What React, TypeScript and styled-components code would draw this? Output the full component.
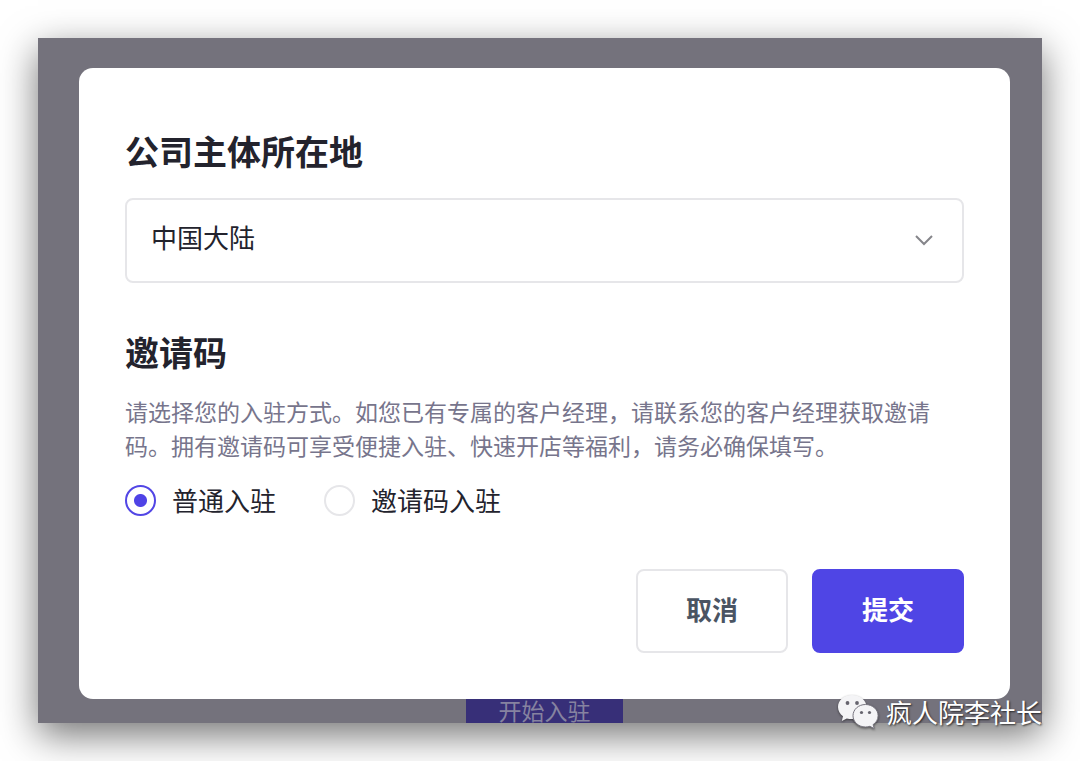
import React, { useState } from "react";
import styled, { createGlobalStyle } from "styled-components";

const GlobalStyle = createGlobalStyle`
  *, *::before, *::after { box-sizing: border-box; }
  body {
    margin: 0;
    background: #fff;
    font-family: "Noto Sans CJK SC", "Liberation Sans", sans-serif;
    color: #23232d;
  }
  button, select, input { font: inherit; color: inherit; margin: 0; }
`;

const Page = styled.main`
  padding: 38px;
  overflow: hidden;
`;

const Backdrop = styled.div`
  position: relative;
  display: flex;
  flex-direction: column;
  align-items: center;
  padding: 30px 32px 0 41px;
  background: #74727c;
  box-shadow: 0 12px 36px rgba(0, 0, 0, 0.55);
`;

const Dialog = styled.form`
  width: 100%;
  display: flex;
  flex-direction: column;
  padding: 58px 46px 46px;
  border-radius: 14px;
  background: #fff;
`;

const Title = styled.h2`
  margin: 0;
  font-size: 34px;
  line-height: 50px;
  font-weight: 700;
`;

const SelectBox = styled.div`
  position: relative;
  margin: 22px 0 44px;
`;

const Select = styled.select`
  display: block;
  width: 100%;
  height: 85px;
  padding: 0 72px 8px 24px;
  border: 2px solid #e6e6e9;
  border-radius: 8px;
  background: #fff;
  appearance: none;
  font-size: 26px;
`;

const Chevron = styled.svg`
  position: absolute;
  top: 50%;
  right: 30px;
  width: 20px;
  height: 12px;
  margin-top: -6px;
  pointer-events: none;
`;

const Hint = styled.p`
  margin: 17px 0 21px;
  padding-right: 24px;
  font-size: 23px;
  line-height: 34px;
  color: #77758c;
`;

const RadioRow = styled.div`
  display: flex;
  gap: 48px;
`;

const RadioLabel = styled.label`
  display: flex;
  align-items: center;
  gap: 16px;
  font-size: 26px;
  line-height: 34px;
`;

const Radio = styled.input`
  appearance: none;
  width: 31px;
  height: 31px;
  border: 2px solid #e6e6e9;
  border-radius: 50%;
  background: #fff;
  &:checked {
    border-color: #5246e5;
    background: radial-gradient(circle, #4f43e6 6px, #fff 7px);
  }
`;

const Actions = styled.div`
  display: flex;
  justify-content: flex-end;
  gap: 24px;
  margin-top: 52px;
`;

const Button = styled.button<{ $primary?: boolean }>`
  width: 152px;
  height: 84px;
  padding: 0 0 6px;
  border: 2px solid ${(p) => (p.$primary ? "#4f45e5" : "#e6e6e9")};
  border-radius: 8px;
  background: ${(p) => (p.$primary ? "#4f45e5" : "#fff")};
  color: ${(p) => (p.$primary ? "#fff" : "#4a5463")};
  font-size: 26px;
  font-weight: 700;
`;

const StartButton = styled.button`
  display: flex;
  justify-content: center;
  width: 157px;
  height: 24px;
  padding: 0;
  border: 0;
  background: #372f78;
  color: #8683a0;
  font-size: 23px;
  line-height: 22px;
`;

const Watermark = styled.div`
  position: absolute;
  right: 0;
  bottom: -8px;
  display: flex;
  align-items: center;
  gap: 7px;
  color: #fff;
  font-size: 26px;
  line-height: 38px;
  white-space: nowrap;
  text-shadow: 1px 1px 2px rgba(0, 0, 0, 0.7);
`;

const ChatLogo = styled.svg`
  width: 42px;
  height: 36px;
  filter: drop-shadow(0 1px 1px rgba(0, 0, 0, 0.5));
`;

export default function App() {
  const [region, setRegion] = useState("cn");
  const [mode, setMode] = useState("normal");

  return (
    <>
      <GlobalStyle />
      <Page>
        <Backdrop>
          <Dialog onSubmit={(e) => e.preventDefault()}>
            <Title as="label" htmlFor="region">公司主体所在地</Title>
            <SelectBox>
              <Select id="region" value={region} onChange={(e) => setRegion(e.target.value)}>
                <option value="cn">中国大陆</option>
              </Select>
              <Chevron viewBox="0 0 20 12" fill="none" stroke="#85858a" strokeWidth="2" aria-hidden="true">
                <path d="M2 1l8 8 8-8" />
              </Chevron>
            </SelectBox>
            <Title id="invite">邀请码</Title>
            <Hint>
              请选择您的入驻方式。如您已有专属的客户经理，请联系您的客户经理获取邀请码。拥有邀请码可享受便捷入驻、快速开店等福利，请务必确保填写。
            </Hint>
            <RadioRow role="radiogroup" aria-labelledby="invite">
              <RadioLabel>
                <Radio type="radio" name="mode" checked={mode === "normal"} onChange={() => setMode("normal")} />
                普通入驻
              </RadioLabel>
              <RadioLabel>
                <Radio type="radio" name="mode" checked={mode === "invite"} onChange={() => setMode("invite")} />
                邀请码入驻
              </RadioLabel>
            </RadioRow>
            <Actions>
              <Button type="button">取消</Button>
              <Button type="submit" $primary>提交</Button>
            </Actions>
          </Dialog>
          <StartButton type="button">开始入驻</StartButton>
          <Watermark>
            <ChatLogo viewBox="0 0 42 36" aria-hidden="true">
              <path
                fill="#f4f4f6"
                d="M15 1C7 1 1 6.300 1 13c0 3.900 2 7 5 9.200L4.800 27l5-2.600c1.700.5 3.400.7 5.200.7 8 0 14.500-5.400 14.500-12.100S23 1 15 1z"
              />
              <circle cx="10.500" cy="9" r="1.900" fill="#66646e" />
              <circle cx="20" cy="9" r="1.900" fill="#66646e" />
              <path
                fill="#f4f4f6"
                stroke="#77757f"
                strokeWidth="1"
                d="M28.500 10.500c-7 0-12.500 5-12.500 11.200S21.500 33 28.500 33c1.500 0 3-.2 4.400-.7l4.300 2.300-1.100-4c3-2 5-5 5-8.900 0-6.200-5.600-11.200-12.600-11.200z"
              />
              <circle cx="24.500" cy="18.500" r="1.600" fill="#66646e" />
              <circle cx="32.500" cy="18.500" r="1.600" fill="#66646e" />
            </ChatLogo>
            <span>疯人院李社长</span>
          </Watermark>
        </Backdrop>
      </Page>
    </>
  );
}
